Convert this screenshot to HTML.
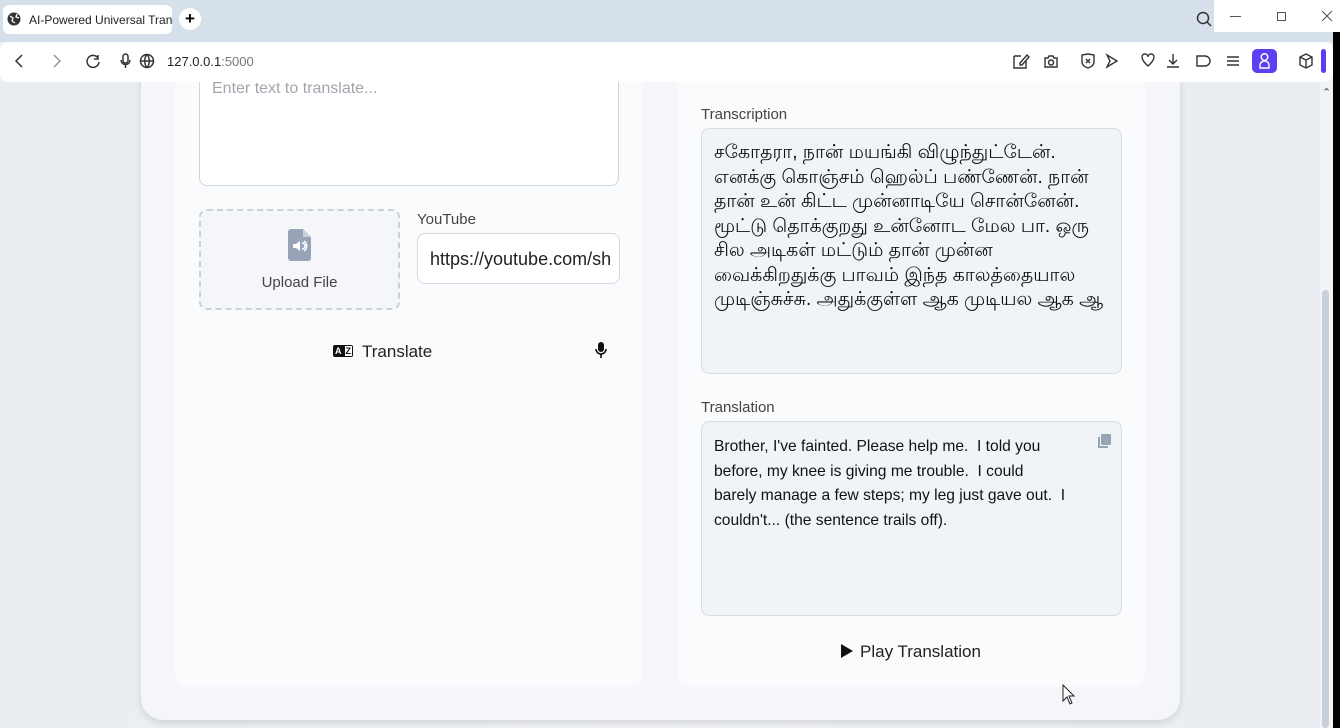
<!DOCTYPE html>
<html><head><meta charset="utf-8"><style>
*{box-sizing:border-box;margin:0;padding:0}
body{width:1340px;height:728px;overflow:hidden;background:#eceff3;font-family:"Liberation Sans",sans-serif;position:relative}
.abs{position:absolute}
.tabbar{left:0;top:0;width:1340px;height:42px;background:#d6e0ea}
.tab{left:3px;top:5px;width:169px;height:29px;background:#fff;border-radius:6px;font-size:12px;color:#222;padding:8px 0 0 26px;white-space:nowrap;overflow:hidden}
.toolbar{left:0;top:42px;width:1333px;height:40px;background:#fff;border-radius:8px}
.ico{stroke:#333;fill:none;stroke-width:1.5}
.page{left:0;top:82px;width:1320px;height:646px;background:linear-gradient(90deg,#e9edf2,#f1f3f6 50%,#e9edf2)}
.card{left:141px;top:60px;width:1039px;height:660px;background:#f4f6f9;border-radius:22px;box-shadow:0 3px 8px rgba(0,0,0,.12)}
.panel{background:#fafbfc;border-radius:12px}
.lbl{font-size:15px;color:#444}
.ta{border:1px solid #d7dce3;border-radius:8px;background:#f1f4f7}
</style></head><body>
<div class="abs page"></div>
<div class="abs" style="left:1320px;top:82px;width:13px;height:646px;background:#f1f3f6"></div>
<div class="abs" style="left:1322px;top:290px;width:7px;height:438px;background:#c8d0da;border-radius:4px"></div>
<div class="abs" style="left:1322px;top:86px;font-size:11px;color:#444">&#8963;</div>

<div class="abs card"></div>
<div class="abs panel" style="left:175px;top:60px;width:468px;height:627px"></div>
<div class="abs panel" style="left:677px;top:60px;width:468px;height:627px"></div>

<div class="abs" style="left:199px;top:60px;width:420px;height:126px;border:1px solid #cfd5dd;border-radius:8px;background:#fff"></div>
<div class="abs" style="left:212px;top:80px;font-size:16px;color:#a0a6ae">Enter text to translate...</div>
<div class="abs" style="left:199px;top:209px;width:201px;height:101px;border:2px dashed #c9d1dc;border-radius:8px;background:#f4f6f9"></div>
<svg class="abs" style="left:288px;top:229px" width="24" height="32"><path d="M0 3a3 3 0 0 1 3-3h12l8 8v21a3 3 0 0 1-3 3H3a3 3 0 0 1-3-3z" fill="#97a3b6"/><path d="M15 0v8h8" fill="#c8d0dc"/><path d="M5 15h3l4-3v10l-4-3H5z" fill="#fff"/><path d="M14 14a3 3 0 0 1 0 6M16 12a6 6 0 0 1 0 10" stroke="#fff" fill="none" stroke-width="1.5"/></svg>
<div class="abs" style="left:199px;top:274px;width:201px;text-align:center;font-size:15px;color:#444">Upload File</div>
<div class="abs lbl" style="left:417px;top:211px">YouTube</div>
<div class="abs" style="left:417px;top:233px;width:203px;height:51px;border:1px solid #d3d9e1;border-radius:8px;background:#fff;overflow:hidden;white-space:nowrap;padding:15px 0 0 12px;font-size:18px;color:#222">https://youtube.com/sh</div>
<div class="abs" style="left:333px;top:345px;width:20px;height:12px;background:#111;border-radius:2px;color:#fff;font-size:9px;font-weight:bold;line-height:12px;padding-left:2px">A<span style="background:#fff;color:#111;margin-left:3px;padding:0 1px">Z</span></div>
<div class="abs" style="left:362px;top:342px;font-size:17px;color:#222">Translate</div>
<svg class="abs" style="left:595px;top:342px" width="12" height="17"><rect x="3" y="0" width="6" height="10" rx="3" fill="#111"/><path d="M1 7a5 5 0 0 0 10 0M6 12v4" stroke="#111" fill="none" stroke-width="1.6"/></svg>

<div class="abs lbl" style="left:701px;top:106px">Transcription</div>
<div class="abs ta" style="left:701px;top:128px;width:421px;height:246px"></div>
<div class="abs" style="left:714px;top:141px;white-space:nowrap;font-family:'Liberation Sans','DejaVu Sans',sans-serif;font-size:19px;line-height:24.5px;color:#111">சகோதரா, நான் மயங்கி விழுந்துட்டேன்.<br>எனக்கு கொஞ்சம் ஹெல்ப் பண்ணேன். நான்<br>தான் உன் கிட்ட முன்னாடியே சொன்னேன்.<br>மூட்டு தொக்குறது உன்னோட மேல பா. ஒரு<br>சில அடிகள் மட்டும் தான் முன்ன<br>வைக்கிறதுக்கு பாவம் இந்த காலத்தையால<br>முடிஞ்சுச்சு. அதுக்குள்ள ஆக முடியல ஆக ஆ</div>

<div class="abs lbl" style="left:701px;top:399px">Translation</div>
<div class="abs ta" style="left:701px;top:421px;width:421px;height:195px"></div>
<svg class="abs" style="left:1097px;top:433px" width="16" height="16"><rect x="4" y="1" width="10" height="11" rx="1.5" fill="#97a3b6"/><path d="M2 4v10h9" stroke="#97a3b6" fill="none" stroke-width="2"/></svg>
<div class="abs" style="left:714px;top:435px;white-space:nowrap;font-size:15.6px;line-height:24.5px;color:#111">Brother, I've fainted. Please help me.&nbsp; I told you<br>before, my knee is giving me trouble.&nbsp; I could<br>barely manage a few steps; my leg just gave out.&nbsp; I<br>couldn't... (the sentence trails off).</div>
<svg class="abs" style="left:840px;top:643px" width="14" height="16"><path d="M1 1l12 7-12 7z" fill="#111"/></svg>
<div class="abs" style="left:860px;top:642px;font-size:17px;color:#222">Play Translation</div>
<svg class="abs" style="left:1062px;top:684px" width="14" height="22"><path d="M1 1v16l4-4 3 7 2-1-3-7h5z" fill="#fff" stroke="#222"/></svg>

<div class="abs tabbar"></div>
<div class="abs tab">AI-Powered Universal Tran</div>
<svg class="abs" style="left:7px;top:12px" width="14" height="14"><circle cx="7" cy="7" r="6.5" fill="#333"/><path d="M3 4l3 2-1 3 3 2M10 2l-1 3 3 1" stroke="#fff" fill="none" stroke-width="1.3"/></svg>
<div class="abs" style="left:179px;top:8px;width:22px;height:22px;border-radius:11px;background:#fff;font-size:17px;font-weight:bold;text-align:center;line-height:22px">+</div>
<svg class="abs" style="left:1196px;top:11px" width="16" height="16"><circle cx="7" cy="7" r="5.5" class="ico"/><path d="M11 11l4 4" class="ico"/></svg>
<div class="abs" style="left:1214px;top:0;width:126px;height:32px;background:#fff"></div>
<div class="abs" style="left:1230px;top:16px;width:11px;height:1px;background:#555"></div>
<div class="abs" style="left:1277px;top:12px;width:9px;height:9px;border:1px solid #555"></div>
<svg class="abs" style="left:1321px;top:10px" width="12" height="12"><path d="M1 1l10 10M11 1L1 11" stroke="#555"/></svg>
<div class="abs" style="left:1333px;top:32px;width:7px;height:696px;background:#000"></div>
<div class="abs toolbar"></div>
<svg class="abs" style="left:12px;top:54px" width="90" height="14"><path d="M10 1L4 7l6 6" class="ico"/><path d="M42 1l6 6-6 6" stroke="#999" fill="none" stroke-width="1.5"/><path d="M86 4a6 6 0 1 0 1 4M86 1v4h-4" class="ico"/></svg>
<svg class="abs" style="left:119px;top:53px" width="40" height="16"><rect x="4" y="1" width="5" height="9" rx="2.5" class="ico"/><path d="M2 7a4.5 4.5 0 0 0 9 0M6.5 11v4" class="ico"/><circle cx="28" cy="8" r="6.5" class="ico"/><path d="M21.5 8h13M28 1.5c-3 3-3 10 0 13M28 1.5c3 3 3 10 0 13" class="ico"/></svg>
<div class="abs" style="left:167px;top:54px;font-size:13px;color:#222">127.0.0.1<span style="color:#777">:5000</span></div>
<svg class="abs" style="left:1012px;top:52px" width="240" height="18" fill="none" stroke="#333" stroke-width="1.4"><path d="M2 4h7M2 4v12h12V9M8 11l7-8 2 2-7 8H8z"/><path d="M33 6h3l1-2h4l1 2h3v9H33zM39 8a2.5 2.5 0 1 0 .1 0"/><path d="M70 3l6-1 6 1v7c0 3-3 5-6 6-3-1-6-3-6-6zM74 7l4 4M78 7l-4 4"/><path d="M95 3l10 6-10 6 3-6z"/><path d="M130 5c0-4 6-4 6 0 0-4 6-4 6 0 0 4-6 9-6 9s-6-5-6-9z"/><path d="M161 2v10M157 8l4 4 4-4M155 15h12"/><path d="M185 4h8a5 5 0 0 1 0 10h-8z"/><path d="M215 5h12M215 9h12M215 13h12"/></svg>
<div class="abs" style="left:1252px;top:49px;width:25px;height:24px;background:#5b3ff5;border-radius:5px"></div>
<svg class="abs" style="left:1257px;top:52px" width="15" height="18" fill="none" stroke="#fff" stroke-width="1.4"><circle cx="7.5" cy="5" r="3.3"/><path d="M3 16v-3a4.5 4 0 0 1 9 0v3z"/></svg>
<div class="abs" style="left:1288px;top:42px;width:45px;height:40px;background:#fff;border-radius:8px"></div>
<svg class="abs" style="left:1298px;top:53px" width="16" height="16" fill="none" stroke="#333" stroke-width="1.4"><path d="M8 1l6 3v8l-6 3-6-3V4zM2 4l6 3 6-3M8 7v8"/></svg>
<div class="abs" style="left:1321px;top:49px;width:5px;height:24px;background:#5b3ff5;border-radius:3px"></div>
</body></html>
